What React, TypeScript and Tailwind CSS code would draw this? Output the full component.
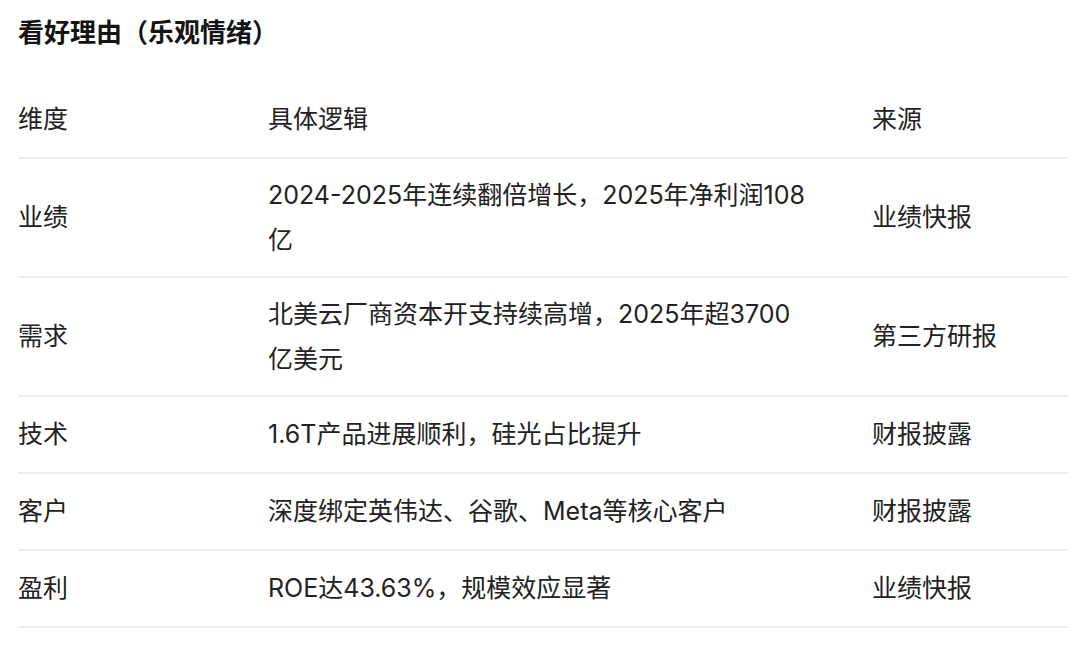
const rows = [
  { dim: "业绩", logic: ["2024-2025年连续翻倍增长，2025年净利润108", "亿"], source: "业绩快报" },
  { dim: "需求", logic: ["北美云厂商资本开支持续高增，2025年超3700", "亿美元"], source: "第三方研报" },
  { dim: "技术", logic: ["1.6T产品进展顺利，硅光占比提升"], source: "财报披露" },
  { dim: "客户", logic: ["深度绑定英伟达、谷歌、Meta等核心客户"], source: "财报披露" },
  { dim: "盈利", logic: ["ROE达43.63%，规模效应显著"], source: "业绩快报" },
];

export default function App() {
  return (
    <div
      className="w-[1080px] h-[647px] bg-white text-[#222222] overflow-hidden"
      style={{ fontFamily: 'Inter, "Noto Sans CJK SC", sans-serif' }}
    >
      <div className="px-[18px] pt-[15px]">
        <h2 className="text-[26px] leading-[36px] font-bold text-[#141414]">看好理由（乐观情绪）</h2>
        <table className="mt-[31px] w-[1050px] table-fixed border-collapse text-[25px] leading-[45px]">
          <colgroup>
            <col className="w-[250px]" />
            <col className="w-[604px]" />
            <col className="w-[196px]" />
          </colgroup>
          <thead>
            <tr className="border-b-2 border-[#ededed]">
              <th className="py-[15px] text-left font-normal">维度</th>
              <th className="py-[15px] text-left font-normal">具体逻辑</th>
              <th className="py-[15px] text-left font-normal">来源</th>
            </tr>
          </thead>
          <tbody>
            {rows.map((r) => {
              const pad = r.logic.length > 1 ? "py-[13.5px]" : "py-[15px]";
              return (
                <tr key={r.dim} className="border-b-2 border-[#ededed]">
                  <td className={`${pad} align-middle`}>{r.dim}</td>
                  <td className={`${pad} align-middle`}>
                    {r.logic.map((line) => (
                      <div key={line} className="whitespace-nowrap">{line}</div>
                    ))}
                  </td>
                  <td className={`${pad} align-middle`}>{r.source}</td>
                </tr>
              );
            })}
          </tbody>
        </table>
      </div>
    </div>
  );
}
